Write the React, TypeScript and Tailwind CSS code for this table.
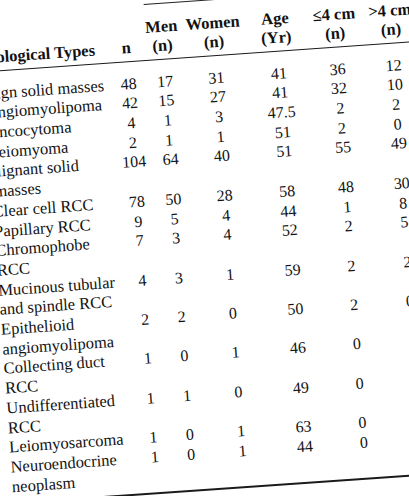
import React from 'react';

type Row = { lines: string[]; sub?: boolean; vals: string[] };

const rows: Row[] = [
  { lines: ['Benign solid masses'], vals: ['48', '17', '31', '41', '36', '12'] },
  { lines: ['Angiomyolipoma'], sub: true, vals: ['42', '15', '27', '41', '32', '10'] },
  { lines: ['Oncocytoma'], sub: true, vals: ['4', '1', '3', '47.5', '2', '2'] },
  { lines: ['Leiomyoma'], sub: true, vals: ['2', '1', '1', '51', '2', '0'] },
  { lines: ['Malignant solid', 'masses'], vals: ['104', '64', '40', '51', '55', '49'] },
  { lines: ['Clear cell RCC'], sub: true, vals: ['78', '50', '28', '58', '48', '30'] },
  { lines: ['Papillary RCC'], sub: true, vals: ['9', '5', '4', '44', '1', '8'] },
  { lines: ['Chromophobe', 'RCC'], sub: true, vals: ['7', '3', '4', '52', '2', '5'] },
  { lines: ['Mucinous tubular', 'and spindle RCC'], sub: true, vals: ['4', '3', '1', '59', '2', '2'] },
  { lines: ['Epithelioid', 'angiomyolipoma'], sub: true, vals: ['2', '2', '0', '50', '2', '0'] },
  { lines: ['Collecting duct', 'RCC'], sub: true, vals: ['1', '0', '1', '46', '0', '1'] },
  { lines: ['Undifferentiated', 'RCC'], sub: true, vals: ['1', '1', '0', '49', '0', '1'] },
  { lines: ['Leiomyosarcoma'], sub: true, vals: ['1', '0', '1', '63', '0', '1'] },
  { lines: ['Neuroendocrine', 'neoplasm'], sub: true, vals: ['1', '0', '1', '44', '0', '1'] },
];

const cols = 'grid grid-cols-[142px_35px_38px_65px_60px_58px_54px]';

export default function App() {
  return (
    <div className="w-[409px] h-[496px] overflow-hidden bg-white text-[#121212] font-['Liberation_Serif',serif]">
      <div className="-rotate-4 origin-top-left w-[420px]">
        <div className="w-[452px] ml-[-37px] pt-[14px]">
          {/* spanning rule over the counts */}
          <div className="ml-[180px] border-t-[1.5px] border-[#222]" />

          <div className={`${cols} mt-[13px] font-bold text-[16.5px] leading-[19px]`}>
            <div />
            <div />
            <div className="text-center">Men</div>
            <div className="text-center">Women</div>
            <div className="text-center">Age</div>
            <div className="text-center">≤4 cm</div>
            <div className="text-center">&gt;4 cm</div>

            <div>Histological Types</div>
            <div className="text-center">n</div>
            <div className="text-center">(n)</div>
            <div className="text-center">(n)</div>
            <div className="text-center">(Yr)</div>
            <div className="text-center">(n)</div>
            <div className="text-center">(n)</div>
          </div>

          <div className="mt-[4px] border-t-[1.5px] border-[#1a1a1a]" />

          <div className="mt-[11.65px] flex flex-col">
            {rows.map((r) => (
              <div key={r.lines.join(' ')} className={`${cols} leading-[19.7px]`}>
                <div className={`text-[16.5px] whitespace-nowrap ${r.sub ? 'pl-[15px]' : ''}`}>
                  {r.lines.map((l, i) => (
                    <div key={l} className={!r.sub && i > 0 ? 'pl-[18px]' : ''}>
                      {l}
                    </div>
                  ))}
                </div>
                {r.vals.map((v, i) => (
                  <div key={i} className="text-center text-[16px]">
                    {v}
                  </div>
                ))}
              </div>
            ))}
          </div>

          <div className="mt-[6px] border-t-2 border-[#1a1a1a]" />
        </div>
      </div>
    </div>
  );
}
